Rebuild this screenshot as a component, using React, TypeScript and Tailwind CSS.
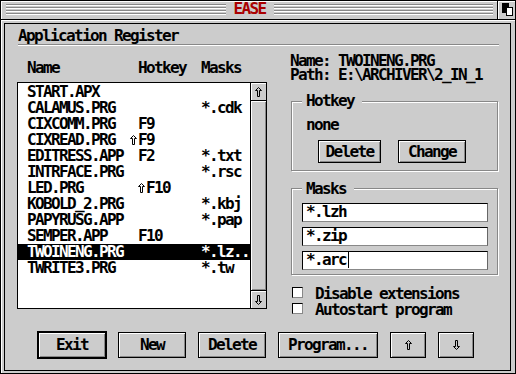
import React from 'react';

const Arrow = ({ down = false }: { down?: boolean }) => (
  <svg width="7" height="10" viewBox="0 0 7 10" className={down ? 'rotate-180' : ''}>
    <polygon
      points="3.5,0.5 6.5,3.5 4.5,3.5 4.5,9.5 2.5,9.5 2.5,3.5 0.5,3.5"
      fill="none"
      stroke="currentColor"
      strokeWidth="1"
    />
  </svg>
);

const Shift = () => (
  <span className="w-[8px] h-[16px] flex items-start pt-[3px] shrink-0">
    <Arrow />
  </span>
);

type Row = { n: string; h?: string; s?: boolean; off?: boolean; m?: string; sel?: boolean };

const rows: Row[] = [
  { n: 'START.APX' },
  { n: 'CALAMUS.PRG', m: '*.cdk' },
  { n: 'CIXCOMM.PRG', h: 'F9' },
  { n: 'CIXREAD.PRG', h: 'F9', s: true, off: true },
  { n: 'EDITRESS.APP', h: 'F2', m: '*.txt' },
  { n: 'INTRFACE.PRG', m: '*.rsc' },
  { n: 'LED.PRG', h: 'F10', s: true },
  { n: 'KOBOLD_2.PRG', m: '*.kbj' },
  { n: 'PAPYRUSG.APP', m: '*.pap' },
  { n: 'SEMPER.APP', h: 'F10' },
  { n: 'TWOINENG.PRG', m: '*.lz..', sel: true },
  { n: 'TWRITE3.PRG', m: '*.tw' },
];

const btn =
  'flex items-center justify-center bg-[#cccccc] border-black shadow-[inset_1px_1px_0_#fff,inset_-1px_-1px_0_#888]';

const stripes =
  'flex-1 h-[11px] mt-[3px] bg-[repeating-linear-gradient(to_bottom,#888888_0px,#888888_1px,#ffffff_1px,#ffffff_2px,transparent_2px,transparent_3px)]';

export default function App() {
  return (
    <div className="w-[516px] h-[374px] bg-[#cccccc] text-black font-['DejaVu_Sans_Mono',monospace] font-bold text-[16px] leading-[16px] tracking-[-1.63px] overflow-hidden whitespace-pre">
      {/* Title bar */}
      <div className="h-[20px] flex border border-black">
        <div className="flex-1 flex shadow-[inset_1px_1px_0_#fff] pl-[5px] pr-[4px]">
          <div className={stripes} />
          <div className="px-[8px] text-[#aa0000] h-[16px]">EASE</div>
          <div className={stripes} />
        </div>
        <div className="w-[18px] border-l border-black shadow-[inset_1px_1px_0_#fff]">
          <svg width="17" height="18" viewBox="0 0 17 18">
            <rect x="4" y="2" width="7" height="10" fill="#000" />
            <rect x="8.5" y="6.5" width="6" height="8" fill="#fff" stroke="#000" strokeWidth="1" />
          </svg>
        </div>
      </div>

      {/* Window body */}
      <div className="h-[354px] border-x border-b border-black">
        <div className="h-full border-t border-l border-white pt-[2px] pl-[2px]">
          <div className="w-[507px] h-[348px] border border-black flex flex-col">
            <div className="mt-[4px] pl-[13px] h-[16px]">Application Register</div>
            <div className="ml-[13px] w-[481px] h-[1px] bg-[#888888]" />
            <div className="ml-[13px] w-[481px] h-[1px] bg-white" />

            <div className="h-[285px] flex">
              {/* Left column */}
              <div className="ml-[12px] w-[250px] flex flex-col">
                <div className="mt-[14px] h-[16px] flex pl-[10px]">
                  <span className="w-[111px]">Name</span>
                  <span className="w-[63px]">Hotkey</span>
                  <span>Masks</span>
                </div>
                <div className="mt-[6px] h-[227px] border border-black flex bg-white">
                  <div className="w-[232px] pt-[1px]">
                    {rows.map((r) => (
                      <div
                        key={r.n}
                        className={`flex h-[16px] pl-[9px] ${r.sel ? 'bg-black text-white' : ''}`}
                      >
                        <span className="w-[111px] shrink-0">{r.n}</span>
                        <span className={`w-[63px] shrink-0 flex ${r.off ? 'ml-[-8px] mr-[8px]' : ''}`}>
                          {r.s && <Shift />}
                          <span>{r.h ?? ''}</span>
                        </span>
                        <span>{r.m ?? ''}</span>
                      </div>
                    ))}
                  </div>
                  <div className="w-[16px] border-l border-black flex flex-col bg-[#cccccc]">
                    <div className="h-[18px] border-b border-black flex items-center justify-center shadow-[inset_1px_1px_0_#fff]">
                      <Arrow />
                    </div>
                    <div className="flex-1 shadow-[inset_1px_1px_0_#fff,inset_-1px_-1px_0_#888]" />
                    <div className="h-[18px] border-t border-black flex items-center justify-center shadow-[inset_1px_1px_0_#fff]">
                      <Arrow down />
                    </div>
                  </div>
                </div>
              </div>

              {/* Right column */}
              <div className="ml-[23px] w-[208px] flex flex-col">
                <div className="mt-[8px] h-[14px] leading-[14px]">Name: TWOINENG.PRG</div>
                <div className="h-[14px] leading-[14px]">Path: E:\ARCHIVER\2_IN_1</div>

                <div className="relative ml-[1px] mt-[19px] w-[207px] h-[70px] border border-[#888888] shadow-[inset_1px_1px_0_#fff,1px_1px_0_#fff]">
                  <div className="absolute left-[10px] top-[-9px] bg-[#cccccc] pl-[4px] pr-[8px] h-[16px]">Hotkey</div>
                  <div className="pt-[15px] pl-[14px] h-[31px]">none</div>
                  <div className="flex mt-[7px] ml-[26px]">
                    <div className={`${btn} border w-[63px] h-[23px]`}>Delete</div>
                    <div className={`${btn} border w-[68px] h-[23px] ml-[17px]`}>Change</div>
                  </div>
                </div>

                <div className="relative ml-[1px] mt-[17px] w-[207px] h-[87px] border border-[#888888] shadow-[inset_1px_1px_0_#fff,1px_1px_0_#fff] pt-[14px] pl-[10px] flex flex-col gap-[5px]">
                  <div className="absolute left-[10px] top-[-8px] bg-[#cccccc] pl-[4px] pr-[8px] h-[16px]">Masks</div>
                  {['*.lzh', '*.zip', '*.arc'].map((m, i) => (
                    <div
                      key={m}
                      className="w-[186px] h-[19px] bg-white border border-t-black border-l-black border-r-[#666666] border-b-[#888888] pl-[3px] flex items-start"
                    >
                      <span>{m}</span>
                      {i === 2 && <span className="ml-[2px] w-[1px] h-[16px] bg-black" />}
                    </div>
                  ))}
                </div>

                <div className="mt-[11px] flex flex-col">
                  {['Disable extensions', 'Autostart program'].map((t) => (
                    <div key={t} className="h-[16px] flex items-start">
                      <span className="ml-[2px] mt-[1px] w-[11px] h-[11px] bg-white border border-t-black border-l-black border-r-[#888888] border-b-[#888888] shrink-0" />
                      <span className="ml-[12px]">{t}</span>
                    </div>
                  ))}
                </div>
              </div>
            </div>

            {/* Bottom buttons */}
            <div className="flex items-center h-[28px] pl-[32px]">
              <div className={`${btn} border-2 w-[70px] h-[28px]`}>Exit</div>
              <div className={`${btn} border w-[68px] h-[26px] ml-[11px]`}>New</div>
              <div className={`${btn} border w-[68px] h-[26px] ml-[12px]`}>Delete</div>
              <div className={`${btn} border w-[100px] h-[26px] ml-[12px]`}>Program...</div>
              <div className={`${btn} border w-[36px] h-[26px] ml-[12px]`}>
                <Arrow />
              </div>
              <div className={`${btn} border w-[36px] h-[26px] ml-[12px]`}>
                <Arrow down />
              </div>
            </div>
          </div>
        </div>
      </div>
    </div>
  );
}
